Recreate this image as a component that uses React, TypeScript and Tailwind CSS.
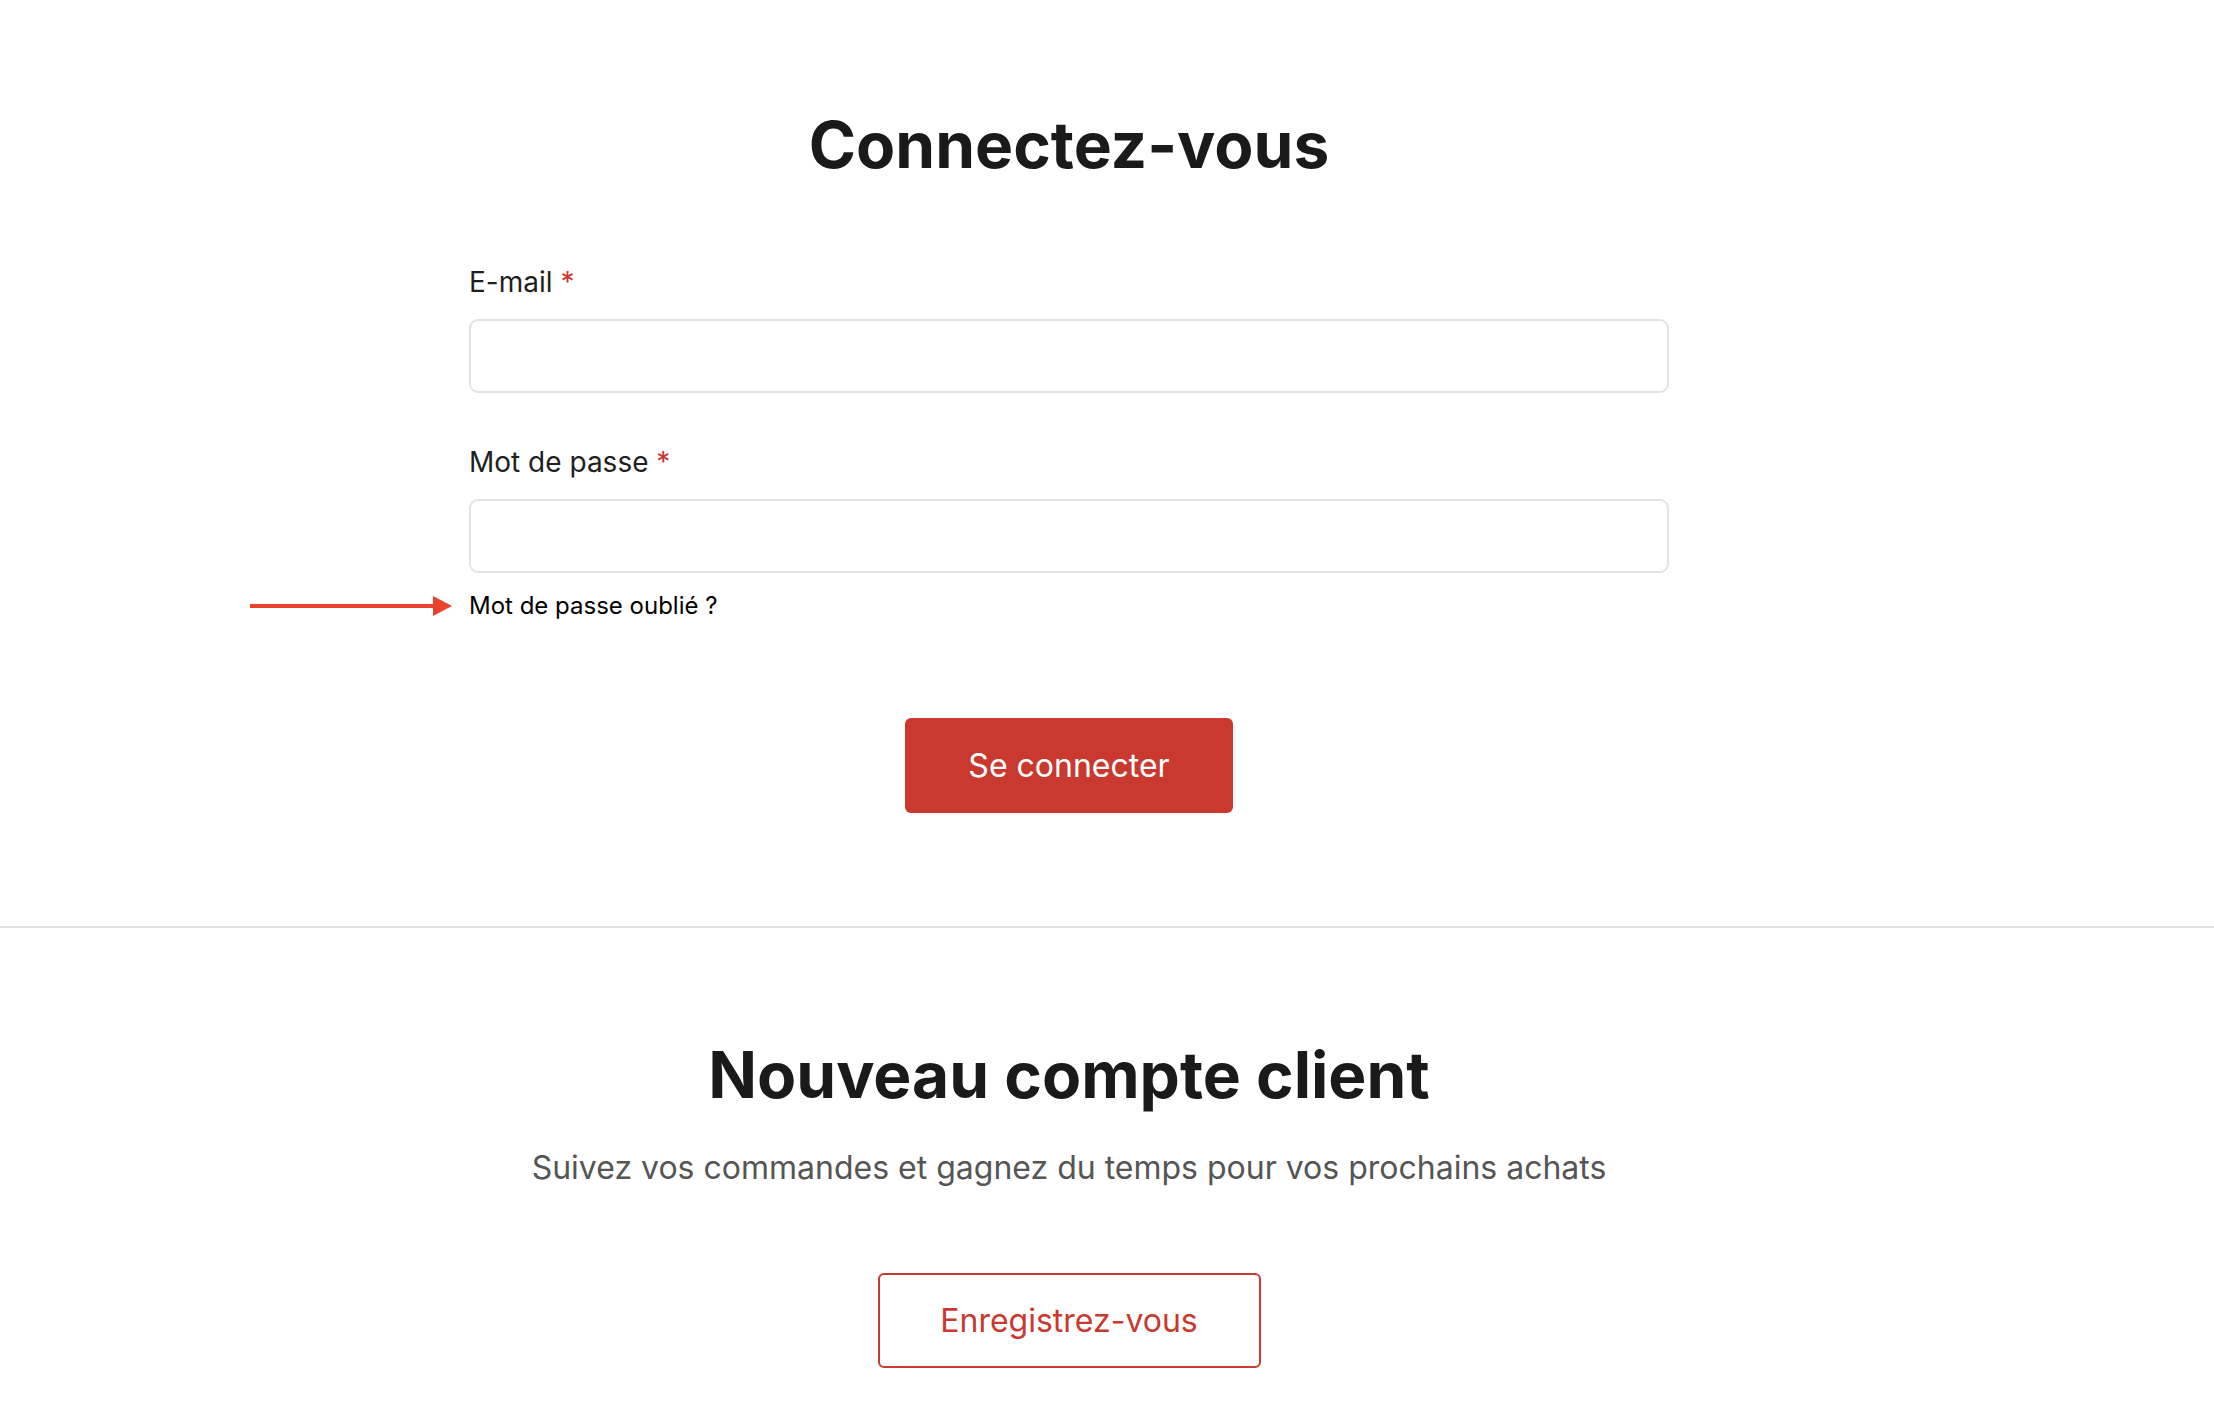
export default function App() {
  return (
    <div className="min-h-screen bg-white text-[#1a1a1a] font-['Inter',sans-serif]">
      {/* Connexion */}
      <section className="pt-[113px] pb-[113px] border-b-2 border-[#e3e3e3]">
        <div className="w-[1200px] ml-[469px]">
          <h1 className="text-[64px] leading-none font-bold text-center">Connectez-vous</h1>

          <label className="block mt-[91px] text-[28px] leading-none text-[#1f1f1f]">
            E-mail <span className="text-[#c9392f]">*</span>
          </label>
          <input
            type="email"
            className="block mt-[23px] w-full h-[74px] border-2 border-[#e3e3e3] rounded-[9px] px-5 text-[26px] outline-none"
          />

          <label className="block mt-[55px] text-[28px] leading-none text-[#1f1f1f]">
            Mot de passe <span className="text-[#c9392f]">*</span>
          </label>
          <input
            type="password"
            className="block mt-[23px] w-full h-[74px] border-2 border-[#e3e3e3] rounded-[9px] px-5 text-[26px] outline-none"
          />

          <div className="relative mt-[21px] flex">
            <svg
              className="absolute right-full top-[2px] mr-[17px]"
              width="202"
              height="20"
              viewBox="0 0 202 20"
            >
              <rect x="0" y="8" width="186" height="4" fill="#e8432d" />
              <polygon points="183,0 202,10 183,20" fill="#e8432d" />
            </svg>
            <a href="#" className="text-[24px] leading-none text-black">Mot de passe oublié ?</a>
          </div>

          <div className="mt-[100px] flex justify-center">
            <button className="w-[328px] h-[95px] rounded-[6px] bg-[#c9392f] text-white text-[32px]">
              Se connecter
            </button>
          </div>
        </div>
      </section>

      {/* Nouveau compte */}
      <section className="pt-[115px] pb-[60px]">
        <div className="w-[1200px] ml-[469px] flex flex-col items-center">
          <h2 className="text-[64px] leading-none font-bold">Nouveau compte client</h2>
          <p className="mt-[45px] text-[32px] leading-none text-[#555555]">
            Suivez vos commandes et gagnez du temps pour vos prochains achats
          </p>
          <button className="mt-[89px] w-[383px] h-[95px] rounded-[6px] border-2 border-[#c9392f] text-[#c9392f] text-[32px] bg-white">
            Enregistrez-vous
          </button>
        </div>
      </section>
    </div>
  );
}
